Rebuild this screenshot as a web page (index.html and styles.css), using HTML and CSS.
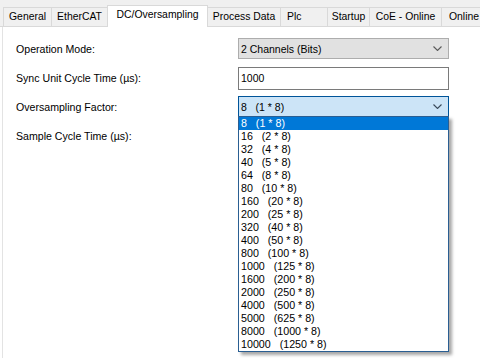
FILE: index.html
```html
<!DOCTYPE html>
<html>
<head>
<meta charset="utf-8">
<link rel="stylesheet" href="styles.css">
</head>
<body>
<div class="window">
  <div class="tabbar">
    <div class="tab t1">General</div>
    <div class="tab t2">EtherCAT</div>
    <div class="tab selected t3">DC/Oversampling</div>
    <div class="tab t4">Process Data</div>
    <div class="tab t5">Plc</div>
    <div class="tab t6">Startup</div>
    <div class="tab t7">CoE - Online</div>
    <div class="tab t8">Online</div>
  </div>
  <div class="panel">
    <div class="form">
      <div class="row">
        <span class="label">Operation Mode:</span>
        <div class="combo">
          <span class="value">2 Channels (Bits)</span>
          <svg class="chev" width="9" height="5" viewBox="0 0 9 5"><polyline points="0.5,0.5 4.5,4.5 8.5,0.5" fill="none" stroke="#5a5a5a" stroke-width="1.1"/></svg>
        </div>
      </div>
      <div class="row">
        <span class="label">Sync Unit Cycle Time (µs):</span>
        <div class="input">1000</div>
      </div>
      <div class="row">
        <span class="label">Oversampling Factor:</span>
        <div class="combo open">
          <span class="value">8   (1 * 8)</span>
          <svg class="chev" width="9" height="5" viewBox="0 0 9 5"><polyline points="0.5,0.5 4.5,4.5 8.5,0.5" fill="none" stroke="#3a4a5a" stroke-width="1.1"/></svg>
          <ul class="list">
            <li class="sel">8   (1 * 8)</li>
            <li>16   (2 * 8)</li>
            <li>32   (4 * 8)</li>
            <li>40   (5 * 8)</li>
            <li>64   (8 * 8)</li>
            <li>80   (10 * 8)</li>
            <li>160   (20 * 8)</li>
            <li>200   (25 * 8)</li>
            <li>320   (40 * 8)</li>
            <li>400   (50 * 8)</li>
            <li>800   (100 * 8)</li>
            <li>1000   (125 * 8)</li>
            <li>1600   (200 * 8)</li>
            <li>2000   (250 * 8)</li>
            <li>4000   (500 * 8)</li>
            <li>5000   (625 * 8)</li>
            <li>8000   (1000 * 8)</li>
            <li>10000   (1250 * 8)</li>
          </ul>
        </div>
      </div>
      <div class="row">
        <span class="label">Sample Cycle Time (µs):</span>
      </div>
    </div>
  </div>
</div>
</body>
</html>
```

FILE: styles.css
```css
html, body {
  margin: 0;
  padding: 0;
  background: #ffffff;
}
body {
  font-family: "Liberation Sans", Arial, sans-serif;
  font-size: 11px;
  color: #000;
  width: 480px;
  height: 358px;
  overflow: hidden;
}
.window {
  display: flex;
  flex-direction: column;
  height: 358px;
}
.tabbar {
  display: flex;
  align-items: flex-end;
  height: 27px;
  box-sizing: border-box;
  padding-left: 3px;
  background: #f0f0f0;
  border-bottom: 1px solid #d9d9d9;
  white-space: nowrap;
}
.tab {
  height: 19px;
  box-sizing: border-box;
  border-top: 1px solid #d9d9d9;
  border-left: 1px solid #d9d9d9;
  background: #f0f0f0;
  text-align: center;
  line-height: 17px;
  flex: none;
  font-size: 10.4px;
}
.tab.selected {
  height: 22px;
  margin-bottom: -1px;
  border-right: 1px solid #d9d9d9;
  margin-right: -1px;
  background: #ffffff;
  line-height: 18px;
  position: relative;
  z-index: 1;
}
.t1 { width: 48px; }
.t2 { width: 56px; }
.t3 { width: 101px; }
.t4 { width: 73px; }
.t5 { width: 47px; text-align: left; padding-left: 6px; }
.t6 { width: 42px; }
.t7 { width: 72px; }
.t8 { width: 46px; border-right: 1px solid #d9d9d9; }
.panel {
  flex: 1;
  background: #ffffff;
  margin-left: 2px;
  border-left: 1px solid #e3e3e3;
}
.form {
  display: flex;
  flex-direction: column;
  padding-top: 7px;
  padding-left: 13px;
}
.row {
  display: flex;
  align-items: center;
  height: 29px;
}
.label {
  width: 222px;
  flex: none;
  font-size: 10.6px;
}
.combo {
  position: relative;
  width: 211px;
  height: 21px;
  box-sizing: border-box;
  border: 1px solid #adadad;
  background: #e1e1e1;
  display: flex;
  align-items: center;
  padding-left: 2px;
  font-size: 10.5px;
}
.combo .value {
  flex: 1;
  white-space: pre;
}
.chev {
  margin-right: 6px;
  flex: none;
}
.combo.open {
  background: #cce4f7;
  border-color: #005499;
}
.input {
  width: 211px;
  height: 23px;
  box-sizing: border-box;
  border: 1px solid #7a7a7a;
  background: #fff;
  padding-left: 2px;
  line-height: 20px;
  font-size: 10.5px;
  margin-top: 2px;
}
.list {
  position: absolute;
  left: -1px;
  top: 19px;
  width: 211px;
  box-sizing: border-box;
  margin: 0;
  padding: 0;
  list-style: none;
  background: #fff;
  border: 1px solid #2a5e92;
  box-shadow: 3px 3px 3px rgba(0, 0, 0, 0.35);
  z-index: 5;
  font-size: 10.7px;
}
.list li {
  height: 13px;
  line-height: 13px;
  padding-left: 2px;
  white-space: pre;
  color: #000;
}
.list li.sel {
  background: #0078d7;
  color: #fff;
}
```
